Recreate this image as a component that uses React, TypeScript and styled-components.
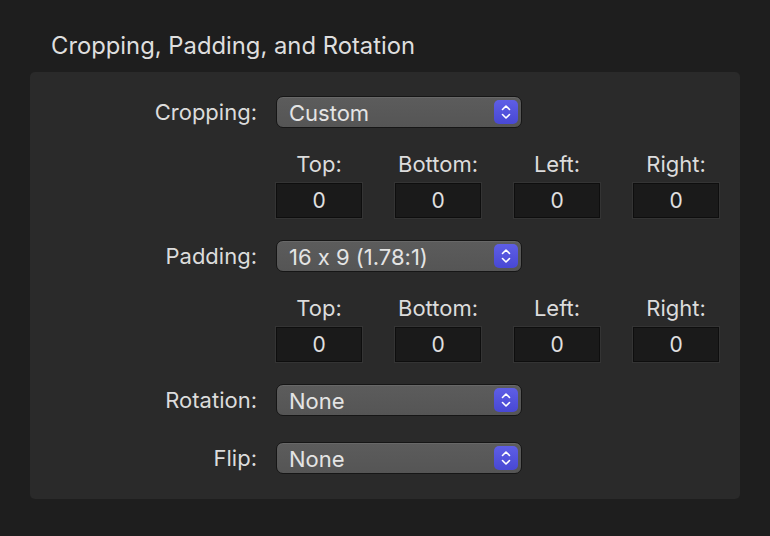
import React from 'react'
import styled, { createGlobalStyle } from 'styled-components'

const GlobalStyle = createGlobalStyle`
  html, body {
    margin: 0;
    padding: 0;
    background: #1e1e1e;
  }
  body {
    font-family: Inter, "Noto Sans", "Liberation Sans", sans-serif;
    font-feature-settings: "calt" 0;
    color: #dcdcdc;
    -webkit-font-smoothing: antialiased;
  }
`

const Page = styled.div`
  width: 770px;
  height: 536px;
  padding: 32px 30px 0 30px;
  box-sizing: border-box;
`

const Title = styled.h2`
  margin: 0 0 12px 21px;
  font-size: 23.8px;
  line-height: 28px;
  font-weight: 400;
  color: #dedede;
`

const Panel = styled.div`
  background: #2a2a2a;
  border-radius: 5px;
  padding: 24px 0 25px 0;
  display: flex;
  flex-direction: column;
`

const Row = styled.div<{ $gap?: number }>`
  display: grid;
  grid-template-columns: 227px 1fr;
  column-gap: 19px;
  align-items: center;
  margin-top: ${(p) => p.$gap ?? 0}px;
`

const Label = styled.div`
  text-align: right;
  font-size: 22px;
  line-height: 24px;
  color: #dcdcdc;
`

const Popup = styled.div`
  width: 246px;
  height: 32px;
  box-sizing: border-box;
  border: 1px solid #161616;
  border-radius: 7px;
  background: linear-gradient(#5c5c5c, #555555);
  box-shadow: inset 0 1px 0 rgba(255, 255, 255, 0.08);
  display: flex;
  align-items: center;
  justify-content: space-between;
  padding: 0 3px 0 12px;
`

const PopupText = styled.span`
  font-size: 22px;
  line-height: 24px;
  color: #e4e4e4;
  padding-top: 2px;
`

const Stepper = styled.span`
  width: 24px;
  height: 24px;
  border-radius: 5px;
  background: linear-gradient(#5e5ee6, #4848d4);
  display: flex;
  align-items: center;
  justify-content: center;
`

const Fields = styled.div<{ $gap?: number }>`
  display: grid;
  grid-template-columns: repeat(4, 86px);
  column-gap: 33px;
  row-gap: 7px;
  margin: ${(p) => p.$gap ?? 0}px 0 0 246px;
`

const FieldLabel = styled.div`
  text-align: center;
  font-size: 22px;
  line-height: 24px;
  color: #dcdcdc;
`

const FieldBox = styled.div`
  height: 35px;
  box-sizing: border-box;
  background: #1a1a1a;
  border: 1px solid #0e0e0e;
  box-shadow: 0 0 0 1px rgba(255, 255, 255, 0.05);
  display: flex;
  align-items: center;
  justify-content: center;
  font-size: 21px;
  color: #e0e0e0;
`

function Chevrons() {
  return (
    <svg width="12" height="18" viewBox="0 0 12 18" fill="none">
      <path d="M2.5 6.5 L6 3 L9.5 6.5" stroke="#fff" strokeWidth="1.6" strokeLinecap="round" strokeLinejoin="round" />
      <path d="M2.5 11.5 L6 15 L9.5 11.5" stroke="#fff" strokeWidth="1.6" strokeLinecap="round" strokeLinejoin="round" />
    </svg>
  )
}

function PopupRow({ label, value, gap }: { label: string; value: string; gap?: number }) {
  return (
    <Row $gap={gap}>
      <Label>{label}</Label>
      <Popup>
        <PopupText>{value}</PopupText>
        <Stepper>
          <Chevrons />
        </Stepper>
      </Popup>
    </Row>
  )
}

const sides = ['Top:', 'Bottom:', 'Left:', 'Right:']

function SideFields({ gap }: { gap?: number }) {
  return (
    <Fields $gap={gap}>
      {sides.map((s) => (
        <FieldLabel key={s}>{s}</FieldLabel>
      ))}
      {sides.map((s) => (
        <FieldBox key={s}>0</FieldBox>
      ))}
    </Fields>
  )
}

export default function App() {
  return (
    <>
      <GlobalStyle />
      <Page>
        <Title>Cropping, Padding, and Rotation</Title>
        <Panel>
          <PopupRow label="Cropping:" value="Custom" />
          <SideFields gap={24} />
          <PopupRow label="Padding:" value="16 x 9 (1.78:1)" gap={22} />
          <SideFields gap={24} />
          <PopupRow label="Rotation:" value="None" gap={22} />
          <PopupRow label="Flip:" value="None" gap={26} />
        </Panel>
      </Page>
    </>
  )
}
